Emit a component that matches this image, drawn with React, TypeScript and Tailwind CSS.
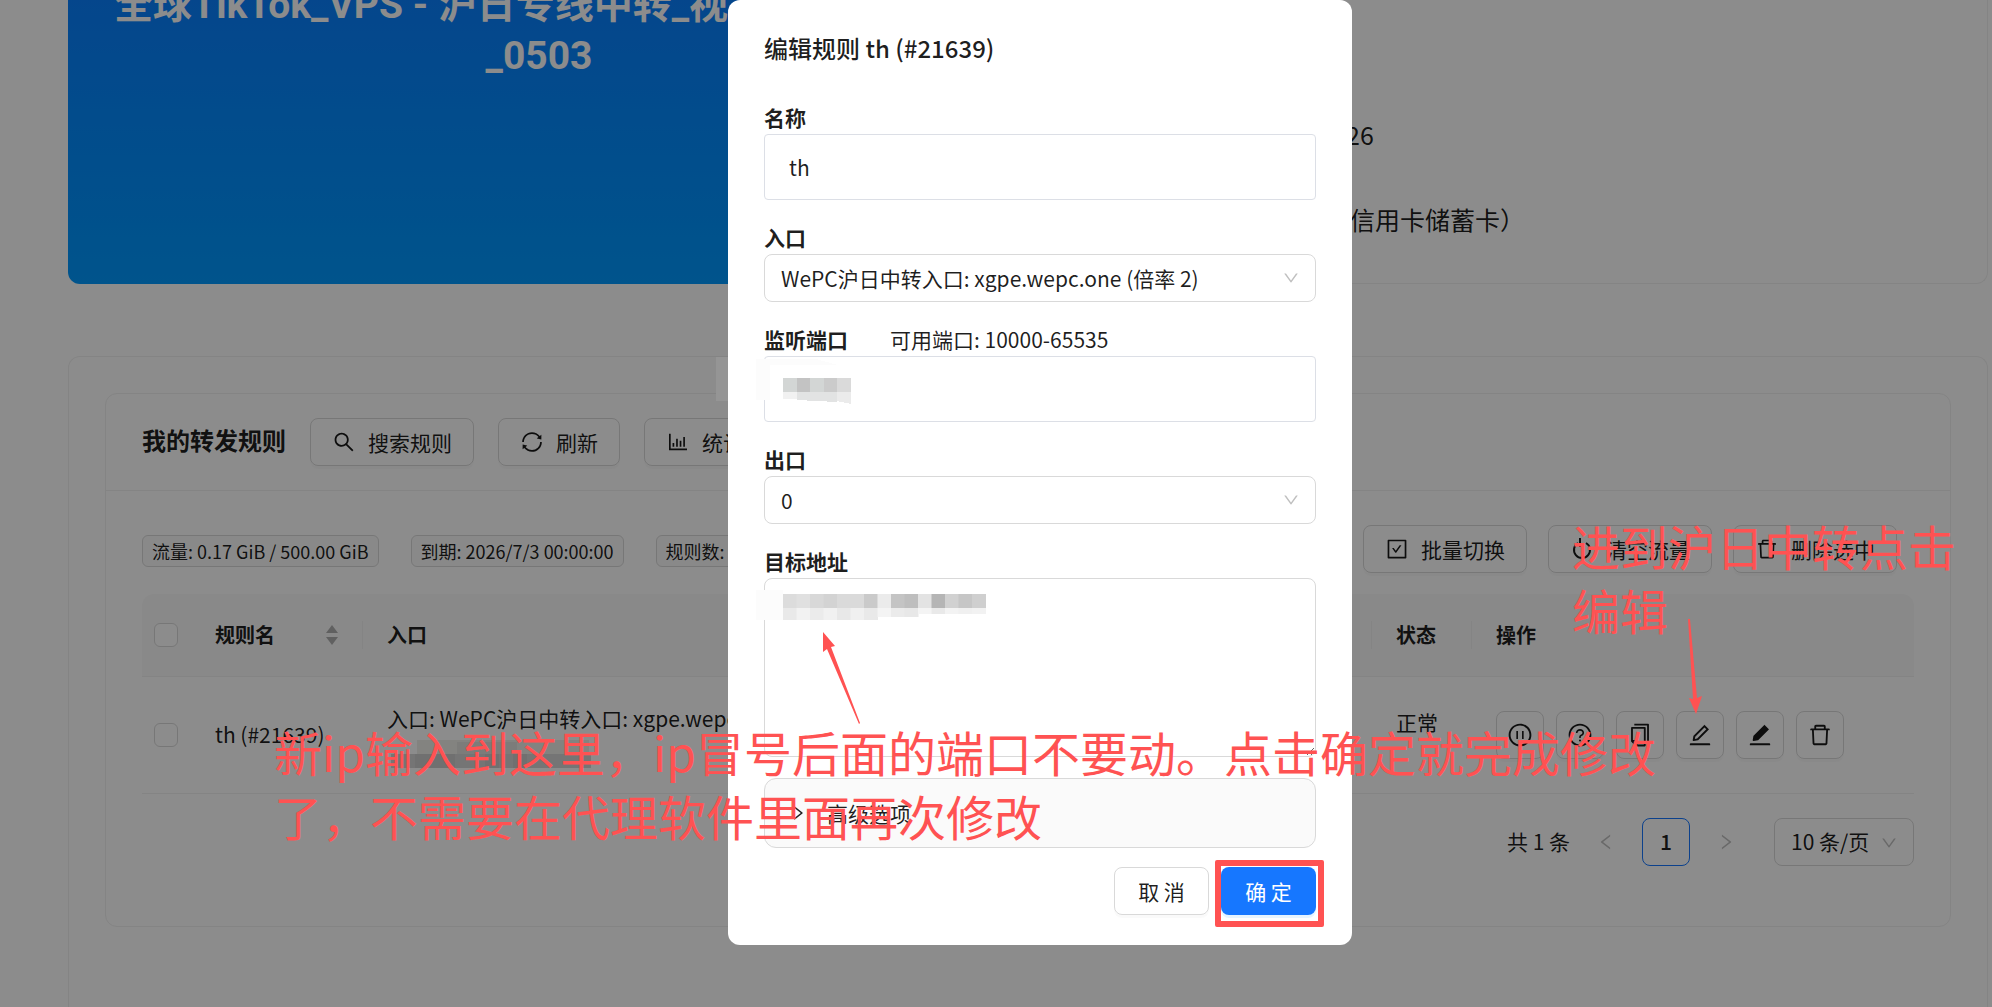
import type { ReactNode } from 'react';
import {
  AiFillEdit,
  AiOutlineBarChart,
  AiOutlineCheckSquare,
  AiOutlineCopy,
  AiOutlineDelete,
  AiOutlineDown,
  AiOutlineEdit,
  AiOutlineLeft,
  AiOutlinePauseCircle,
  AiOutlineQuestionCircle,
  AiOutlineRight,
  AiOutlineSearch,
  AiOutlineSync,
} from 'react-icons/ai';

export default function App() {
  return (
    <div className="relative h-screen w-full overflow-hidden bg-white font-['Noto_Sans_CJK_SC',sans-serif] text-[21px] leading-[33px] text-black/90">
      <Page />
      <div className="absolute inset-0 bg-black/45" />
      <div className="absolute inset-x-0 top-0 flex justify-center pl-[88px]">
        <EditRuleModal />
      </div>
      <Annotations />
    </div>
  );
}

function Page() {
  return (
    <div className="flex h-full flex-col gap-[72px] pl-[68px] pr-1">
      <section className="flex h-[284px] shrink-0">
        <div className="flex w-[942px] flex-col rounded-bl-xl bg-linear-to-b from-[#0a80ff] to-[#0099ff] font-['Roboto','Noto_Sans_CJK_SC',sans-serif] text-[39px] font-bold leading-[51px] text-white">
          <p className="-mt-5 whitespace-nowrap px-[46px]">全球TikTok_VPS - 沪日专线中转_视</p>
          <p className="text-center">_0503</p>
        </div>
        <div className="flex flex-1 flex-col gap-[45px] rounded-br-xl border-b border-r border-[#f0f0f0] pl-[336px] pt-[114px] text-[25px] leading-10">
          <p>26</p>
          <p className="pl-1">信用卡储蓄卡）</p>
        </div>
      </section>
      <section className="flex-1 rounded-t-xl border border-b-0 border-[#f0f0f0] p-9">
        <RulesCard />
      </section>
    </div>
  );
}

function RulesCard() {
  return (
    <div className="rounded-xl border border-[#f0f0f0]">
      <header className="flex h-[97px] items-center gap-6 border-b border-[#f0f0f0] px-9">
        <h2 className="pb-1 text-2xl font-bold">我的转发规则</h2>
        <Button icon={<AiOutlineSearch />}>搜索规则</Button>
        <Button icon={<AiOutlineSync />}>刷新</Button>
        <Button icon={<AiOutlineBarChart />}>统计</Button>
      </header>
      <div className="px-9 pb-[60px] pt-[34px]">
        <div className="flex items-center justify-between pr-[17px]">
          <div className="flex gap-8 pt-1">
            <Tag>流量: 0.17 GiB / 500.00 GiB</Tag>
            <Tag>到期: 2026/7/3 00:00:00</Tag>
            <Tag>规则数:</Tag>
          </div>
          <div className="flex gap-[21px]">
            <Button icon={<AiOutlineCheckSquare />}>批量切换</Button>
            <Button icon={<DropIcon />}>清空流量</Button>
            <Button icon={<AiOutlineDelete />}>删除选中</Button>
          </div>
        </div>
        <RulesTable />
        <div className="mt-6 flex items-center justify-end">
          <span className="mr-3">共 1 条</span>
          <button aria-label="上一页" className="flex size-12 items-center justify-center text-xl text-black/25">
            <AiOutlineLeft />
          </button>
          <button className="mx-3 size-12 rounded-lg border border-[#1677ff] font-medium">1</button>
          <button aria-label="下一页" className="flex size-12 items-center justify-center text-xl text-black/25">
            <AiOutlineRight />
          </button>
          <div className="relative ml-6">
            <select aria-label="每页条数" className="h-12 w-[140px] appearance-none rounded-lg border border-[#d9d9d9] pl-4">
              <option>10 条/页</option>
            </select>
            <AiOutlineDown className="pointer-events-none absolute right-4 top-4 text-lg text-black/25" />
          </div>
        </div>
      </div>
    </div>
  );
}

function RulesTable() {
  return (
    <table className="mt-[21px] w-full table-fixed text-left">
      <colgroup>
        <col className="w-[61px]" />
        <col className="w-[160px]" />
        <col />
        <col className="w-[100px]" />
        <col className="w-[442px]" />
      </colgroup>
      <thead className="h-[82px] border-b border-[#f0f0f0] bg-[#fafafa] text-xl">
        <tr>
          <th className="rounded-tl-xl pl-3">
            <Checkbox label="全选" />
          </th>
          <th>
            <div className="flex items-center justify-between border-r border-[#f0f0f0] pl-3 pr-6">
              规则名
              <SortIcon />
            </div>
          </th>
          <th>
            <div className="border-r border-[#f0f0f0] pl-6">入口</div>
          </th>
          <th>
            <div className="border-r border-[#f0f0f0] pl-6">状态</div>
          </th>
          <th className="rounded-tr-xl pl-6">操作</th>
        </tr>
      </thead>
      <tbody>
        <tr className="h-[117px] border-b border-[#f0f0f0]">
          <td className="pl-3">
            <Checkbox label="选择 th" />
          </td>
          <td className="whitespace-nowrap pl-3">th (#21639)</td>
          <td className="whitespace-nowrap pl-6">
            <p>入口: WePC沪日中转入口: xgpe.wepc</p>
            <svg className="h-[33px] w-[206px]" viewBox="0 0 206 33" shapeRendering="crispEdges">
              <path fill="#efefea" d="M30 5h172v14H30z" />
              <path fill="#e2e2df" d="M70 7h60v12H70z" />
              <path fill="#d6d6d6" d="M4 19h200v14H4z" />
              <path fill="#cccccc" d="M28 19h40v14H28zM98 19h14v14H98zM126 19h14v14h-14z" />
            </svg>
          </td>
          <td className="pb-6 pl-6">正常</td>
          <td className="pl-6">
            <div className="flex gap-3">
              <IconButton label="暂停"><AiOutlinePauseCircle /></IconButton>
              <IconButton label="诊断"><AiOutlineQuestionCircle /></IconButton>
              <IconButton label="复制"><AiOutlineCopy /></IconButton>
              <IconButton label="编辑"><AiOutlineEdit /></IconButton>
              <IconButton label="批量编辑"><AiFillEdit /></IconButton>
              <IconButton label="删除"><AiOutlineDelete /></IconButton>
            </div>
          </td>
        </tr>
      </tbody>
    </table>
  );
}

function EditRuleModal() {
  return (
    <form role="dialog" aria-labelledby="modal-title" className="relative w-[624px] rounded-xl bg-white px-9 pb-[30px] pt-[30px] text-black/88">
      <h1 id="modal-title" className="mb-[35px] text-2xl/9 font-medium">编辑规则 th (#21639)</h1>
      <div className="flex flex-col gap-[21px]">
        <div className="flex flex-col">
          <label htmlFor="name" className="font-bold">名称</label>
          <input id="name" defaultValue="th" className="h-[66px] rounded border border-[#dcdfe6] px-6" />
        </div>
        <SelectField id="inbound" label="入口" value="WePC沪日中转入口: xgpe.wepc.one (倍率 2)" />
        <div className="relative flex flex-col">
          <div className="flex gap-[42px]">
            <label htmlFor="port" className="font-bold">监听端口</label>
            <span>可用端口: 10000-65535</span>
          </div>
          <input id="port" className="h-[66px] rounded border border-[#dcdfe6] px-6" />
          <PortMosaic />
        </div>
        <SelectField id="outbound" label="出口" value="0" />
        <div className="relative flex flex-col">
          <label htmlFor="target" className="font-bold">目标地址</label>
          <textarea id="target" className="h-[179px] rounded-lg border border-[#d9d9d9] px-4" />
          <TargetMosaic />
        </div>
        <button type="button" className="flex h-[70px] items-center gap-5 rounded-xl border border-[#d9d9d9] bg-[#fafafa] px-6">
          <AiOutlineRight className="text-lg" />
          高级选项
        </button>
      </div>
      <div className="mt-[19px] flex justify-end gap-3">
        <button type="button" className="h-12 w-[95px] rounded-lg border border-[#d9d9d9] shadow-[0_3px_0_rgba(0,0,0,0.02)]">取 消</button>
        <div className="relative">
          <button type="button" className="h-12 w-[95px] rounded-lg bg-[#1677ff] text-white shadow-[0_3px_0_rgba(5,145,255,0.1)]">确 定</button>
          <div className="pointer-events-none absolute -bottom-3 -left-1.5 -right-2 -top-[7px] rounded-xs border-6 border-[#ff5252]" />
        </div>
      </div>
    </form>
  );
}

function SelectField({ id, label, value }: { id: string; label: string; value: string }) {
  return (
    <div className="relative flex flex-col">
      <label htmlFor={id} className="font-bold">{label}</label>
      <select id={id} className="h-12 appearance-none rounded-lg border border-[#d9d9d9] px-4">
        <option>{value}</option>
      </select>
      <AiOutlineDown className="pointer-events-none absolute bottom-[15px] right-4 text-lg text-black/25" />
    </div>
  );
}

function Button({ icon, children }: { icon: ReactNode; children: ReactNode }) {
  return (
    <button className="flex h-12 items-center gap-3 whitespace-nowrap rounded-lg border border-[#d9d9d9] px-[21px] shadow-[0_3px_0_rgba(0,0,0,0.02)]">
      <span className="text-2xl">{icon}</span>
      {children}
    </button>
  );
}

function IconButton({ label, children }: { label: string; children: ReactNode }) {
  return (
    <button
      aria-label={label}
      className="flex size-12 items-center justify-center rounded-lg border border-[#d9d9d9] text-[26px] shadow-[0_3px_0_rgba(0,0,0,0.02)]"
    >
      {children}
    </button>
  );
}

function Tag({ children }: { children: ReactNode }) {
  return (
    <span className="flex h-8 items-center whitespace-nowrap rounded-md border border-[#d9d9d9] bg-[#fafafa] px-[9px] text-lg">
      {children}
    </span>
  );
}

function Checkbox({ label }: { label: string }) {
  return (
    <input
      type="checkbox"
      aria-label={label}
      className="block size-6 appearance-none rounded-md border border-[#d9d9d9] bg-white"
    />
  );
}

function SortIcon() {
  return (
    <svg className="h-5 w-3" viewBox="0 0 12 20" fill="#b0b0b0">
      <path d="M6 0l6 8H0zM6 20l6-8H0z" />
    </svg>
  );
}

function DropIcon() {
  return (
    <svg className="size-6" viewBox="0 0 24 24" fill="none" stroke="currentColor" strokeWidth={2}>
      <path d="M8 6a8 8 0 1 0 8 0M10 1v9" />
    </svg>
  );
}

function PortMosaic() {
  return (
    <svg className="pointer-events-none absolute -left-2 top-9 h-12 w-[96px]" viewBox="0 0 96 48" shapeRendering="crispEdges">
      <path fill="#fcfcfc" d="M0 0h60l22 6H14v35H0z" />
      <path fill="#d3d6d5" d="M27 19h14v14H27zM54 19h14v14H54z" />
      <path fill="#c3c3c3" d="M41 19h13v14H41z" />
      <path fill="#cbcbcb" d="M68 19h13v14H68z" />
      <path fill="#dadada" d="M81 19h14v14H81z" />
      <path fill="#f1f1f1" d="M27 33h14v7H27z" />
      <path fill="#e2e3e3" d="M41 33h40v10l-40-2z" />
      <path fill="#ebebeb" d="M81 33h14v12l-14-3z" />
    </svg>
  );
}

const mosaicTop = ['#dcdcdc', '#e0e0e0', '#d8d8d8', '#d3d3d3', '#dadada', '#dadada', '#cacaca', '#ebebeb', '#c4c4c4', '#bebebe', '#e3e3e3', '#b5b5b5', '#d1d1d1', '#c6c6c6', '#cfcfcf'];
const mosaicBottom = ['#e9e9e9', '#f2f2f2', '#ebebeb', '#f1f1f1', '#e8e8e8', '#f0f0f0', '#e9e9e9', '#f4f4f4', '#ebebeb', '#e8e8e8', '#f4f4f4', '#e9e9e9', '#f3f3f3', '#f0f0f0', '#f2f2f2'];

function TargetMosaic() {
  return (
    <svg className="pointer-events-none absolute -left-2 top-[45px] h-[30px] w-[231px]" viewBox="0 0 231 30">
      <path fill="#fcfcfc" d="M0 0h27v30H0z" />
      {mosaicTop.map((fill, i) => (
        <rect key={i} x={27 + i * 13.5} y={4} width={14} height={14} fill={fill} />
      ))}
      {mosaicBottom.map((fill, i) => (
        <rect key={i} x={27 + i * 13.5} y={18} width={14} height={i < 7 ? 12 : i < 10 ? 9 : 6} fill={fill} />
      ))}
    </svg>
  );
}

function Annotations() {
  return (
    <div className="pointer-events-none absolute inset-0 text-5xl/[64px] text-[#ff5252]">
      <div className="absolute left-[716px] top-[357px] h-11 w-3 bg-[#959595]" />
      <p className="absolute left-[274px] top-[719px] whitespace-nowrap">
        新ip输入到这里，ip冒号后面的端口不要动。点击确定就完成修改
        <br />
        了，不需要在代理软件里面再次修改
      </p>
      <p className="absolute left-[1572px] top-[513px] whitespace-nowrap">
        进到沪日中转点击
        <br />
        编辑
      </p>
      <svg className="absolute left-[822px] top-[632px] h-[92px] w-[40px]" viewBox="0 0 40 92" fill="currentColor">
        <path d="M1 0l12 14-4 1 29 76-1 1L5 17l-4 3z" />
      </svg>
      <svg className="absolute left-[1688px] top-[618px] h-24 w-4" viewBox="0 0 16 96" fill="currentColor">
        <path d="M0 1h2l7 79 5-2-6 18-7-16 4 1z" />
      </svg>
    </div>
  );
}
